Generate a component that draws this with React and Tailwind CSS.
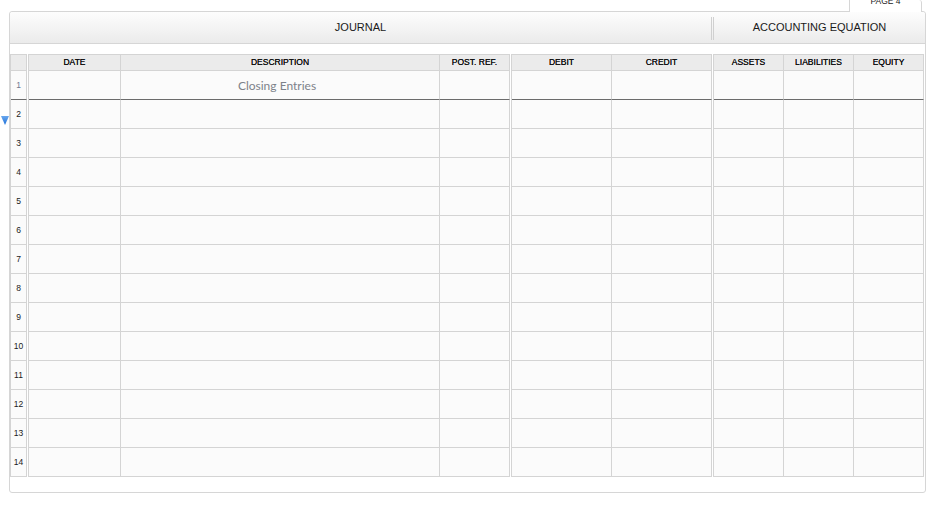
import React from "react";

const B = "border-[#d4d4d4]";

function Group({ cols, rownum }) {
  const rows = Array.from({ length: 14 }, (_, i) => i);
  return (
    <div className={`flex flex-col border-l border-t ${B}`}>
      <div className="flex">
        {cols.map((c, j) => (
          <div
            key={j}
            className={`h-[16px] bg-[#ebebeb] border-r border-b ${B} flex items-center justify-center text-[8.5px] leading-none text-[#111] [text-shadow:0_0_0.2px_#111]`}
            style={{ width: c.w }}
          >
            {c.label}
          </div>
        ))}
      </div>
      {rows.map((r) => (
        <div key={r} className="flex">
          {cols.map((c, j) => (
            <div
              key={j}
              className={`h-[29px] bg-[#fbfbfb] border-r border-b ${
                r === 0 ? "border-r-[#d4d4d4] border-b-[#6b6b6b]" : B
              } flex items-center justify-center`}
              style={{ width: c.w }}
            >
              {rownum ? (
                <span className={`text-[8.5px] leading-none ${r === 0 ? "text-[#6f7a90]" : "text-[#1a1a1a]"}`}>
                  {r + 1}
                </span>
              ) : r === 0 && c.content ? (
                <span
                  className="text-[12px] leading-none text-[#7d828a] -ml-[6px] mt-[2px]"
                  style={{ fontFamily: "Lato, sans-serif" }}
                >
                  {c.content}
                </span>
              ) : null}
            </div>
          ))}
        </div>
      ))}
    </div>
  );
}

export default function App() {
  return (
    <div
      className="relative w-[936px] h-[511px] bg-white overflow-hidden"
      style={{ fontFamily: '"Liberation Sans", Arial, sans-serif' }}
    >
      {/* tab row */}
      <div className="ml-[9px] w-[917px] h-[11px] flex justify-end pr-[4px]">
        <div className="relative z-10 w-[73px] h-[12px] -mb-[1px] bg-white border-l border-r border-[#d6d6d6] rounded-tr-[3px] overflow-hidden flex justify-center">
          <span className="text-[8.5px] leading-none text-[#222] -mt-[3px]">PAGE 4</span>
        </div>
      </div>

      {/* marker */}
      <svg className="absolute left-[1px] top-[116px]" width="8" height="9" viewBox="0 0 8 9">
        <defs>
          <linearGradient id="g" x1="0" y1="0" x2="0" y2="1">
            <stop offset="0" stopColor="#6aa8ef" />
            <stop offset="1" stopColor="#1b6fd8" />
          </linearGradient>
        </defs>
        <polygon points="0,0 8,0 4,9" fill="url(#g)" />
      </svg>

      {/* box */}
      <div className="ml-[9px] w-[917px] h-[482px] border border-[#d6d6d6] rounded-[3px] bg-white flex flex-col">
        <div className="h-[32px] border-b border-[#d6d6d6] bg-gradient-to-b from-[#fdfdfd] to-[#ebebeb] flex items-center rounded-t-[3px]">
          <div className="w-[701px] flex justify-center text-[11px] text-[#1a1a1a]">JOURNAL</div>
          <div className="w-[3px] h-[23px] border-l border-r border-[#d0d0d0] mt-[2px]" />
          <div className="flex-1 flex justify-center text-[11px] text-[#1a1a1a]">ACCOUNTING EQUATION</div>
        </div>
        <div className="h-[10px]" />
        <div className="flex gap-[1px]">
          <Group rownum cols={[{ w: 16, label: "" }]} />
          <Group
            cols={[
              { w: 92, label: "DATE" },
              { w: 319, label: "DESCRIPTION", content: "Closing Entries" },
              { w: 70, label: "POST. REF." },
            ]}
          />
          <Group
            cols={[
              { w: 100, label: "DEBIT" },
              { w: 100, label: "CREDIT" },
            ]}
          />
          <Group
            cols={[
              { w: 70, label: "ASSETS" },
              { w: 70, label: "LIABILITIES" },
              { w: 70, label: "EQUITY" },
            ]}
          />
        </div>
      </div>
    </div>
  );
}
